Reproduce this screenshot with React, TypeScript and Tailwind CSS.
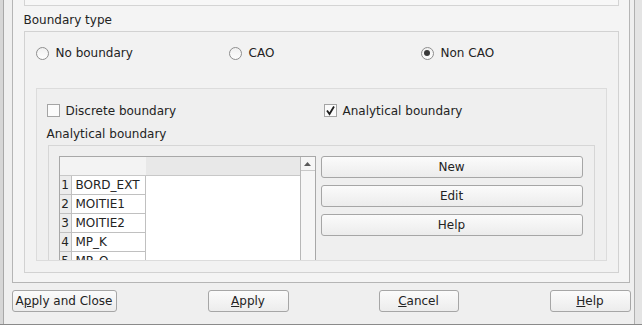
import React from "react";

const ROWS = ["BORD_EXT", "MOITIE1", "MOITIE2", "MP_K", "MP_O"];

function Radio({ label, checked }: { label: string; checked?: boolean }) {
  return (
    <div className="flex items-center gap-[7px]">
      <span className="w-[13px] h-[13px] rounded-full border border-[#8e8e8e] bg-gradient-to-b from-[#f0f0f0] to-[#fdfdfd] flex items-center justify-center">
        {checked && <span className="w-[6px] h-[6px] rounded-full bg-[#3a3a3a]" />}
      </span>
      <span>{label}</span>
    </div>
  );
}

function Check({ label, checked }: { label: string; checked?: boolean }) {
  return (
    <div className="flex items-center gap-[6px]">
      <span className="w-[13px] h-[13px] border border-[#a4a4a4] bg-[#fbfbfb] flex items-center justify-center">
        {checked && (
          <svg width="11" height="11" viewBox="0 0 11 11">
            <path d="M2 5.5 L4.5 9 L9 1.5" fill="none" stroke="#1e1e1e" strokeWidth={1.8} />
          </svg>
        )}
      </span>
      <span>{label}</span>
    </div>
  );
}

function Btn({ children, className }: { children: React.ReactNode; className: string }) {
  return (
    <div
      className={`h-[22px] rounded-[3px] border border-[#a6a6a6] bg-gradient-to-b from-[#fbfbfb] to-[#ececec] flex items-center justify-center ${className}`}
    >
      {children}
    </div>
  );
}

export default function App() {
  return (
    <div
      className="w-[642px] h-[325px] flex flex-col overflow-hidden bg-[#efefef] text-[12px] text-[#232323]"
      style={{ fontFamily: '"DejaVu Sans", sans-serif' }}
    >
      <div className="flex flex-1">
        <div className="w-[3px] bg-[#d6d6d6]" />
        <div className="w-px bg-[#a8a8a8]" />
        <div className="flex-1 flex flex-col">
          {/* scroll area */}
          <div className="ml-[8px] w-[618px] h-[283px] border-x border-b border-[#b5b5b5] bg-[#f4f4f4] pl-[11px] pr-[10px] overflow-hidden">
            <div className="h-[6px] border-x border-b border-[#d4d4d4] bg-[#f7f7f7]" />
            <div className="h-[25px] pt-[3px] flex items-center">Boundary type</div>
            {/* group */}
            <div className="h-[242px] border border-[#d2d2d2] bg-[#f2f2f2] pl-[11px] pr-[11px] overflow-hidden">
              <div className="h-[40px] pt-[2px] flex items-center">
                <div className="w-[193px]">
                  <Radio label="No boundary" />
                </div>
                <div className="w-[192px]">
                  <Radio label="CAO" />
                </div>
                <Radio label="Non CAO" checked />
              </div>
              <div className="mt-[16px] h-[173px] border border-[#dcdcdc] bg-[#efefef] pl-[10px] pr-[11px] overflow-hidden">
                <div className="h-[41px] pt-[2px] flex items-center">
                  <div className="w-[277px]">
                    <Check label="Discrete boundary" />
                  </div>
                  <Check label="Analytical boundary" checked />
                </div>
                <div className="h-[24px] -mt-[9px] pt-[2px] flex items-center">Analytical boundary</div>
                <div className="ml-px h-[120px] border border-[#d6d6d6] bg-[#efefef] pt-[10px] pl-[10px] flex gap-[5px] overflow-hidden">
                  {/* table */}
                  <div className="w-[257px] h-[120px] shrink-0 border border-[#a8a8a8] bg-white flex">
                    <div className="flex-1 flex flex-col">
                      <div className="h-[19px] flex border-b border-[#c8c8c8]">
                        <div className="w-[86px] bg-[#f3f3f3]" />
                        <div className="flex-1 bg-[#e8e8e8]" />
                      </div>
                      {ROWS.map((r, i) => (
                        <div key={r} className="h-[19px] flex shrink-0">
                          <div className="w-[12px] bg-[#ececec] border-r border-b border-[#c0c0c0] flex items-center justify-center">
                            {i + 1}
                          </div>
                          <div className="w-[74px] border-r border-b border-[#c0c0c0] flex items-center pl-[4px]">{r}</div>
                        </div>
                      ))}
                    </div>
                    <div className="w-[15px] border-l border-[#b8b8b8] bg-[#f6f6f6]">
                      <div className="h-[14px] border-b border-[#c8c8c8] flex items-center justify-center">
                        <svg width="7" height="4" viewBox="0 0 7 4">
                          <path d="M0 4 L3.5 0 L7 4 Z" fill="#5a5a5a" />
                        </svg>
                      </div>
                    </div>
                  </div>
                  {/* buttons */}
                  <div className="w-[262px] flex flex-col gap-[7px]">
                    <Btn className="w-full">New</Btn>
                    <Btn className="w-full">Edit</Btn>
                    <Btn className="w-full">Help</Btn>
                  </div>
                </div>
              </div>
            </div>
          </div>
          {/* bottom buttons */}
          <div className="h-[41px] flex items-start pt-[7px] pl-[8px]">
            <Btn className="w-[105px]">
              <span>
                A<span className="underline">p</span>ply and Close
              </span>
            </Btn>
            <Btn className="w-[81px] ml-[91px]">
              <span>
                <span className="underline">A</span>pply
              </span>
            </Btn>
            <Btn className="w-[80px] ml-[90px]">
              <span>
                <span className="underline">C</span>ancel
              </span>
            </Btn>
            <Btn className="w-[81px] ml-[91px]">
              <span>
                <span className="underline">H</span>elp
              </span>
            </Btn>
          </div>
        </div>
        <div className="w-[13px] flex">
          <div className="w-[3px]" />
          <div className="w-px bg-[#b0b0b0]" />
          <div className="flex-1 bg-[#e4e4e4]" />
        </div>
      </div>
      <div className="h-px bg-[#8a8a8a]" />
    </div>
  );
}
